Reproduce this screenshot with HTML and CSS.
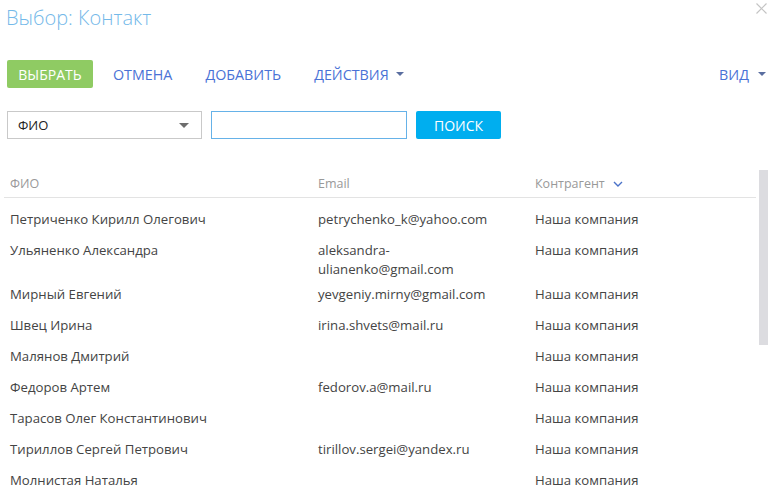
FILE: index.html
```
<!DOCTYPE html>
<html lang="ru">
<head>
<meta charset="utf-8">
<link rel="stylesheet" href="styles.css">
</head>
<body>
<div class="page">
  <div class="titlebar">
    <h1 class="title">Выбор: Контакт</h1>
    <svg class="close" width="11" height="11" viewBox="0 0 11 11"><path d="M0.5 0.5L10.5 10.5M10.5 0.5L0.5 10.5" stroke="#c4c4c4" stroke-width="1.2" fill="none"/></svg>
  </div>
  <div class="toolbar">
    <button class="btn-select">ВЫБРАТЬ</button>
    <span class="tb-link">ОТМЕНА</span>
    <span class="tb-link">ДОБАВИТЬ</span>
    <span class="tb-link">ДЕЙСТВИЯ <span class="caret"></span></span>
    <span class="spacer"></span>
    <span class="tb-link tb-view">ВИД <span class="caret"></span></span>
  </div>
  <div class="search">
    <div class="select"><span>ФИО</span><span class="sel-caret"></span></div>
    <div class="input"></div>
    <button class="btn-search">ПОИСК</button>
  </div>
  <div class="grid-wrap">
    <div class="grid">
      <div class="head">
        <div class="cell">ФИО</div>
        <div class="cell">Email</div>
        <div class="cell">Контрагент <svg class="chev" width="10" height="6" viewBox="0 0 10 6"><path d="M1 1L5 5L9 1" stroke="#4a72c8" stroke-width="1.4" fill="none"/></svg></div>
      </div>
      <div class="body">
        <div class="row"><div class="cell">Петриченко Кирилл Олегович</div><div class="cell">petrychenko_k@yahoo.com</div><div class="cell">Наша компания</div></div>
        <div class="row"><div class="cell">Ульяненко Александра</div><div class="cell">aleksandra-<br>ulianenko@gmail.com</div><div class="cell">Наша компания</div></div>
        <div class="row"><div class="cell">Мирный Евгений</div><div class="cell">yevgeniy.mirny@gmail.com</div><div class="cell">Наша компания</div></div>
        <div class="row"><div class="cell">Швец Ирина</div><div class="cell">irina.shvets@mail.ru</div><div class="cell">Наша компания</div></div>
        <div class="row"><div class="cell">Малянов Дмитрий</div><div class="cell"></div><div class="cell">Наша компания</div></div>
        <div class="row"><div class="cell">Федоров Артем</div><div class="cell">fedorov.a@mail.ru</div><div class="cell">Наша компания</div></div>
        <div class="row"><div class="cell">Тарасов Олег Константинович</div><div class="cell"></div><div class="cell">Наша компания</div></div>
        <div class="row"><div class="cell">Тириллов Сергей Петрович</div><div class="cell">tirillov.sergei@yandex.ru</div><div class="cell">Наша компания</div></div>
        <div class="row"><div class="cell">Молнистая Наталья</div><div class="cell"></div><div class="cell">Наша компания</div></div>
      </div>
    </div>
    <div class="scrollbar"></div>
  </div>
</div>
</body>
</html>
```
FILE: styles.css
```
* { box-sizing: border-box; }
html, body { margin: 0; padding: 0; background: #fff; }
body { font-family: "Open Sans", "Noto Sans", sans-serif; width: 776px; height: 500px; overflow: hidden; }
.page { display: flex; flex-direction: column; }
.titlebar { display: flex; justify-content: space-between; align-items: flex-start; height: 40px; padding: 0 9px 0 6px; }
.title { margin: 0; font-size: 20px; font-weight: 300; color: #74b9e9; line-height: 36px; }
.close { margin-top: 3px; }
.toolbar { display: flex; align-items: center; height: 28px; margin-top: 20px; padding: 0 10px 0 7px; }
.btn-select { height: 28px; width: 86px; border: none; border-radius: 2px; background: #8fcb63; color: #fff; font-family: inherit; font-size: 14px; padding: 0; }
.tb-link { color: #4a72d6; font-size: 14.3px; margin-left: 20px; display: flex; align-items: center; }
.tb-link + .tb-link { margin-left: 33px; }
.spacer { flex: 1; }
.tb-view { margin-left: 0; }
.caret { display: inline-block; width: 0; height: 0; border-left: 4px solid transparent; border-right: 4px solid transparent; border-top: 4px solid #5a6ea0; margin-left: 7px; }
.tb-view .caret { margin-left: 9px; }
.search { display: flex; align-items: center; margin-top: 23px; padding-left: 7px; height: 28px; }
.select { width: 195px; height: 28px; border: 1px solid #c9c9c9; display: flex; align-items: center; justify-content: space-between; padding: 0 12px 0 10px; font-size: 13px; color: #222; }
.sel-caret { width: 0; height: 0; border-left: 5px solid transparent; border-right: 5px solid transparent; border-top: 5px solid #6d6d6d; }
.input { width: 196px; height: 28px; border: 1px solid #66b2e8; margin-left: 9px; }
.btn-search { height: 28px; width: 85px; margin-left: 9px; border: none; border-radius: 2px; background: #00aeef; color: #fff; font-family: inherit; font-size: 14px; padding: 0; }
.grid-wrap { display: flex; margin-top: 31px; padding-left: 4px; }
.grid { width: 752px; font-size: 13.2px; }
.head, .row { display: grid; grid-template-columns: 308px 217px 1fr; }
.head { height: 28px; border-bottom: 1px solid #e3e3e3; color: #999; font-size: 12.5px; align-items: center; }
.head .cell { display: flex; align-items: center; }
.chev { margin-left: 8px; }
.cell { padding-left: 6px; }
.body { padding-top: 9px; color: #444; }
.row { min-height: 31px; padding: 3px 0; line-height: 19px; }
.scrollbar { width: 9px; height: 175px; background: #dcdce0; margin-left: 3px; }
```
